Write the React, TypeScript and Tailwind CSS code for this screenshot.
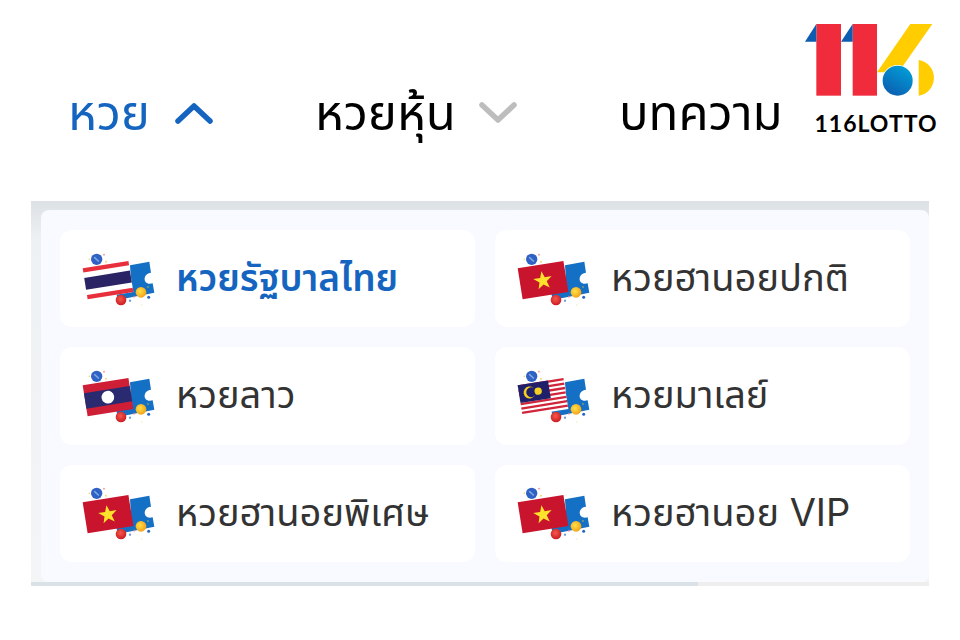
import React from 'react';

const thaiFont = "font-['Inter','Noto_Sans','Noto_Sans_Thai','DejaVu_Sans',sans-serif]";

type FlagKind = 'th' | 'vn' | 'la' | 'my';

const Flag: React.FC<{ kind: FlagKind }> = ({ kind }) => {
  if (kind === 'th') {
    return (
      <>
        <rect width="139" height="94" fill="#fff" />
        <rect width="139" height="13" fill="#e8303c" />
        <rect y="29" width="139" height="36" fill="#2a2465" />
        <rect y="81" width="139" height="13" fill="#e8303c" />
      </>
    );
  }
  if (kind === 'la') {
    return (
      <>
        <rect width="139" height="94" fill="#cf1f36" />
        <rect y="24" width="139" height="47" fill="#2a2a70" />
        <circle cx="69" cy="47" r="19" fill="#fff" />
      </>
    );
  }
  if (kind === 'vn') {
    return (
      <>
        <rect width="139" height="94" fill="#c8142c" />
        <polygon
          points="69,20 76,39 97,39 80,52 86,72 69,60 52,72 58,52 41,39 62,39"
          fill="#fde22b"
        />
      </>
    );
  }
  return (
    <>
      <rect width="139" height="94" fill="#fff" />
      {[0, 13.4, 26.8, 40.2, 53.6, 67, 80.4].map((y) => (
        <rect key={y} y={y} width="139" height="7" fill="#d0253a" />
      ))}
      <rect width="92" height="54" fill="#20206a" />
      <circle cx="32" cy="27" r="18" fill="#f5d020" />
      <circle cx="37" cy="27" r="15" fill="#20206a" />
      <circle cx="58" cy="27" r="11" fill="#f5d020" />
    </>
  );
};

const LottoIcon: React.FC<{ kind: FlagKind }> = ({ kind }) => (
  <svg width="80" height="64" viewBox="45 33 240 192" className="shrink-0">
    <defs>
      <radialGradient id={`ball-y-${kind}`} cx="0.4" cy="0.4" r="0.7">
        <stop offset="0" stopColor="#ffe14a" />
        <stop offset="1" stopColor="#f09a10" />
      </radialGradient>
      <radialGradient id={`ball-r-${kind}`} cx="0.45" cy="0.4" r="0.7">
        <stop offset="0" stopColor="#f45a4a" />
        <stop offset="1" stopColor="#c5101e" />
      </radialGradient>
    </defs>
    <circle cx="95" cy="70" r="17" fill="#2f62c4" />
    <path d="M89 65 L100 75" stroke="#7fa6e0" strokeWidth="5" strokeLinecap="round" />
    <circle cx="117" cy="56" r="2.5" fill="#ee8a90" />
    <circle cx="73" cy="70" r="2.5" fill="#f6d774" />
    <circle cx="123" cy="77" r="3" fill="#f6d774" />
    <path
      d="M195 88 L253 77 L258 110 C232 112 232 150 263 142 L268 170 L158 192 L154 172 L200 164 Z"
      fill="#1470c4"
    />
    <g transform="translate(53 97) rotate(-9.1)">
      <Flag kind={kind} />
    </g>
    <circle cx="168" cy="192" r="16" fill={`url(#ball-r-${kind})`} />
    <circle cx="228" cy="169" r="16" fill={`url(#ball-y-${kind})`} />
    <circle cx="195" cy="194" r="3.5" fill="#6f9edc" />
    <circle cx="251" cy="184" r="4.5" fill="#2466c0" />
    <circle cx="249" cy="153" r="2.5" fill="#c9b23a" />
    <circle cx="207" cy="182" r="2.5" fill="#e77b84" />
    <circle cx="230" cy="207" r="3" fill="#fbf1d8" />
  </svg>
);

const items: { label: string; kind: FlagKind; active?: boolean }[] = [
  { label: 'หวยรัฐบาลไทย', kind: 'th', active: true },
  { label: 'หวยฮานอยปกติ', kind: 'vn' },
  { label: 'หวยลาว', kind: 'la' },
  { label: 'หวยมาเลย์', kind: 'my' },
  { label: 'หวยฮานอยพิเศษ', kind: 'vn' },
  { label: 'หวยฮานอย VIP', kind: 'vn' },
];

const Logo = () => (
  <div className="flex w-[132px] flex-col items-center">
    <svg width="132" height="72" viewBox="44 42 396 216">
      <defs>
        <linearGradient id="logo-ball" x1="0.8" y1="0" x2="0.2" y2="1">
          <stop offset="0" stopColor="#00a0d8" />
          <stop offset="1" stopColor="#0d5cb0" />
        </linearGradient>
      </defs>
      <rect x="78" y="42" width="74" height="215" fill="#ef2b3c" />
      <polygon points="44,95 78,42 78,95" fill="#0d5cb0" />
      <rect x="187" y="42" width="73" height="215" fill="#ef2b3c" />
      <polygon points="152,95 187,42 187,95" fill="#0d5cb0" />
      <polygon points="360,42 426,42 336,170 288,187 260,187" fill="#ffcd00" />
      <circle cx="322" cy="212" r="47" fill="#fff" />
      <circle cx="322" cy="212" r="45" fill="url(#logo-ball)" />
      <path d="M385 150 A53 54 0 0 1 385 257 Z" fill="#ffcd00" />
    </svg>
    <span className="mt-[15px] ml-[10px] text-[23px] leading-[24px] font-bold tracking-[1px] whitespace-nowrap text-black font-['Lato',sans-serif]">
      116LOTTO
    </span>
  </div>
);

export default function App() {
  return (
    <div className={`h-[640px] w-[960px] overflow-hidden bg-white ${thaiFont}`}>
      <header className="flex h-[201px] items-start pt-[24px] pl-[68px]">
        <nav className="flex h-[116px] w-[737px] items-end text-[49px] leading-[54px]">
          <div className="flex w-[247px] items-center gap-[25px] text-[#1565c0]">
            <span>หวย</span>
            <svg width="38" height="22" viewBox="0 0 38 22" fill="none" stroke="#1565c0" strokeWidth="5.5" strokeLinecap="round" strokeLinejoin="round">
              <path d="M3 19 L19 4 L35 19" />
            </svg>
          </div>
          <div className="flex w-[304px] items-center gap-[23px] text-black">
            <span>หวยหุ้น</span>
            <svg width="38" height="22" viewBox="0 0 38 22" fill="none" stroke="#bdbdbd" strokeWidth="5.5" strokeLinecap="round" strokeLinejoin="round">
              <path d="M3 3 L19 18 L35 3" />
            </svg>
          </div>
          <span className="text-black">บทความ</span>
        </nav>
        <Logo />
      </header>

      <div className="ml-[31px] w-[898px] bg-gradient-to-b from-[#dce1e5] via-[#eef1f3] via-[10%] to-[#f3f5f7] pt-[9px] pl-[10px]">
        <div className="grid h-[372px] grid-cols-2 grid-rows-3 gap-x-[20px] gap-y-[20px] rounded-lg bg-[#f8faff] p-[20px] pr-[19px] pl-[19px]">
          {items.map((item) => (
            <div key={item.label} className="flex items-center gap-[16px] rounded-xl bg-white pl-[20px]">
              <LottoIcon kind={item.kind} />
              <span className={`-mt-[3px] leading-none whitespace-nowrap ${item.active ? 'text-[37px] font-semibold text-[#1565c0]' : 'text-[38px] text-[#333333]'}`}>
                {item.label}
              </span>
            </div>
          ))}
        </div>
        <div className="-ml-[10px] h-[4px] w-[898px] bg-[#eeeeee]">
          <div className="h-full w-[667px] bg-[#dbe2e7]" />
        </div>
      </div>
    </div>
  );
}
